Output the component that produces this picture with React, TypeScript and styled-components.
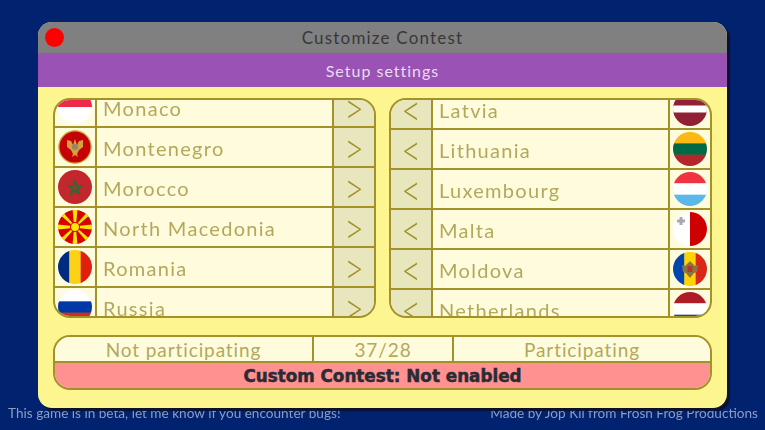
import styled, { createGlobalStyle } from "styled-components";

const GlobalStyle = createGlobalStyle`
  html, body {
    margin: 0;
    width: 765px;
    height: 430px;
    overflow: hidden;
    background: #00226f;
  }
`;

const Page = styled.div`
  width: 765px;
  height: 430px;
  box-sizing: border-box;
  padding-top: 22px;
  display: flex;
  flex-direction: column;
  font-family: Lato, "Open Sans", sans-serif;
  filter: blur(0.55px);
`;

const Window = styled.main`
  position: relative;
  z-index: 1;
  width: 689px;
  height: 386px;
  margin-left: 38px;
  display: flex;
  flex-direction: column;
  background: #fdf58f;
  border-radius: 14px;
  box-shadow: 3px 3px 1px #0a1230;
`;

const TitleBar = styled.header`
  position: relative;
  height: 31px;
  flex: none;
  display: flex;
  align-items: center;
  justify-content: center;
  background: #808080;
  border-radius: 14px 14px 0 0;
  color: #38383c;
  font-size: 17px;
  letter-spacing: 1.2px;
`;

const CloseDot = styled.span`
  position: absolute;
  left: 7px;
  top: 5.5px;
  width: 19px;
  height: 19px;
  border-radius: 50%;
  background: #ff0000;
`;

const SubBar = styled.div`
  height: 34px;
  flex: none;
  display: flex;
  align-items: center;
  justify-content: center;
  background: #9a52b5;
  color: #eadcf0;
  font-size: 16px;
  letter-spacing: 1px;
`;

const Content = styled.div`
  flex: 1;
  display: flex;
  flex-direction: column;
  gap: 17px;
  padding: 11px 15px 0;
`;

const Panels = styled.div`
  display: grid;
  grid-template-columns: 323px 323px;
  column-gap: 13px;
`;

const Panel = styled.section`
  box-sizing: border-box;
  height: 220px;
  border: 2px solid #a3912a;
  border-radius: 17px;
  overflow: hidden;
  background: #fefcdc;
`;

const RowList = styled.div<{ $offset: number }>`
  margin-top: ${(p) => -p.$offset}px;
`;

const Row = styled.div`
  box-sizing: border-box;
  height: 40px;
  display: grid;
  grid-template-columns: 40px 1fr 40px;
  border-bottom: 2px solid #a3912a;
`;

const FlagCell = styled.div`
  display: flex;
  align-items: center;
  justify-content: center;
`;

const NameCell = styled.div`
  display: flex;
  align-items: center;
  padding: 2px 0 0 6px;
  border-left: 2px solid #a3912a;
  border-right: 2px solid #a3912a;
  color: #b3a85c;
  font-size: 20px;
  letter-spacing: 1.3px;
`;

const MoveButton = styled.button`
  display: flex;
  align-items: center;
  justify-content: center;
  border: 0;
  padding: 0;
  overflow: hidden;
  background: #e8e6bd;
  color: #a09028;
  font-family: inherit;
`;

const Chevron = styled.span`
  display: inline-block;
  font-size: 34px;
  font-weight: 300;
  line-height: 26px;
  transform: scaleY(1.3);
`;

const Summary = styled.section`
  box-sizing: border-box;
  height: 55px;
  border: 2px solid #a3912a;
  border-radius: 17px;
  overflow: hidden;
  display: flex;
  flex-direction: column;
`;

const SummaryHead = styled.div`
  height: 24px;
  flex: none;
  display: grid;
  grid-template-columns: 257px 140px 1fr;
  background: #fefcdc;
  border-bottom: 2px solid #a3912a;
`;

const SummaryCell = styled.div`
  display: flex;
  align-items: center;
  justify-content: center;
  color: #b3a85c;
  font-size: 19px;
  letter-spacing: 0.9px;
  & + & {
    border-left: 2px solid #a3912a;
  }
`;

const StatusBar = styled.div`
  flex: 1;
  display: flex;
  align-items: center;
  justify-content: center;
  background: #ff9191;
  color: #2b2b33;
  font-family: "DejaVu Sans", sans-serif;
  font-size: 16.8px;
  font-weight: 700;
  -webkit-text-stroke: 0.5px #2b2b33;
`;

const Footer = styled.footer`
  display: flex;
  justify-content: space-between;
  margin-top: -3px;
  padding: 0 7px 0 8px;
  color: #8c9cc6;
  font-size: 13.6px;
  line-height: 16px;
`;

function Disc({ children }: { children: React.ReactNode }) {
  return (
    <svg width="34" height="34" viewBox="0 0 34 34">
      <defs>
        <clipPath id="disc">
          <circle cx="17" cy="17" r="17" />
        </clipPath>
      </defs>
      <g clipPath="url(#disc)">{children}</g>
    </svg>
  );
}

function Stripes({ colors }: { colors: string[] }) {
  const h = 34 / colors.length;
  return (
    <>
      {colors.map((c, i) => (
        <rect key={c + i} x="0" y={i * h} width="34" height={h + 0.3} fill={c} />
      ))}
    </>
  );
}

function Bars({ colors }: { colors: string[] }) {
  const w = 34 / colors.length;
  return (
    <>
      {colors.map((c, i) => (
        <rect key={c + i} x={i * w} y="0" width={w + 0.3} height="34" fill={c} />
      ))}
    </>
  );
}

const flags: Record<string, React.ReactNode> = {
  Monaco: <Stripes colors={["#ee2a4b", "#ffffff"]} />,
  Montenegro: (
    <>
      <circle cx="17" cy="17" r="17" fill="#d3ae3b" />
      <circle cx="17" cy="17" r="15.5" fill="#c40308" />
      <path d="M9 10 L13 11 L15 15 L17 9 L19 15 L21 11 L25 10 L25 17 L21 20 L19 24 L20 27 L17 25 L14 27 L15 24 L13 20 L9 17 Z" fill="#d8a03c" />
      <circle cx="17" cy="17" r="3" fill="#8a8a70" />
    </>
  ),
  Morocco: (
    <>
      <rect width="34" height="34" fill="#c1272d" />
      <path d="M17 9 L19.2 15.3 L25.6 15.3 L20.4 19.2 L22.3 25.5 L17 21.7 L11.7 25.5 L13.6 19.2 L8.4 15.3 L14.8 15.3 Z" fill="#2b6a33" />
      <path d="M17 14.5 L18 16.6 L20 16.8 L18.6 18.4 L19 20.4 L17 19.4 L15 20.4 L15.4 18.4 L14 16.8 L16 16.6 Z" fill="#a03a30" />
    </>
  ),
  "North Macedonia": (
    <>
      <rect width="34" height="34" fill="#d80000" />
      {[0, 45, 90, 135, 180, 225, 270, 315].map((a) => (
        <path
          key={a}
          d={a % 90 === 0 ? "M16.2 17 L14.5 -1 L19.5 -1 L17.8 17 Z" : "M16.4 17 L15 -3 L19 -3 L17.6 17 Z"}
          fill="#ffe600"
          transform={`rotate(${a} 17 17)`}
        />
      ))}
      <circle cx="17" cy="17" r="5" fill="#d80000" />
      <circle cx="17" cy="17" r="4" fill="#ffe600" />
    </>
  ),
  Romania: <Bars colors={["#002b7f", "#fcd116", "#e0200f"]} />,
  Russia: <Stripes colors={["#ffffff", "#0039a6", "#d52b1e"]} />,
  Latvia: (
    <>
      <rect width="34" height="34" fill="#8f2035" />
      <rect y="13.5" width="34" height="7" fill="#ffffff" />
    </>
  ),
  Lithuania: <Stripes colors={["#fdb913", "#006a44", "#b3272b"]} />,
  Luxembourg: <Stripes colors={["#ef3340", "#ffffff", "#5bb8e8"]} />,
  Malta: (
    <>
      <Bars colors={["#ffffff", "#cf0000"]} />
      <path d="M4 7.5 H6.5 V5 H9.5 V7.5 H12 V10.5 H9.5 V13 H6.5 V10.5 H4 Z" fill="#a8a8ae" />
    </>
  ),
  Moldova: (
    <>
      <Bars colors={["#0046ae", "#ffd200", "#d9281a"]} />
      <path d="M9 13 L12 14 L17 9 L22 14 L25 13 L24 20 L21 21 L17 26 L13 21 L10 20 Z" fill="#8a7440" />
      <rect x="14.5" y="14" width="5" height="6" fill="#b33a2a" />
    </>
  ),
  Netherlands: <Stripes colors={["#ae1c28", "#ffffff", "#21468b"]} />,
};

type Side = "left" | "right";

function CountryList({ side, names, offset }: { side: Side; names: string[]; offset: number }) {
  return (
    <Panel>
      <RowList $offset={offset}>
        {names.map((name) => {
          const flag = (
            <FlagCell>
              <Disc>{flags[name]}</Disc>
            </FlagCell>
          );
          const move = (
            <MoveButton>
              <Chevron>{side === "left" ? ">" : "<"}</Chevron>
            </MoveButton>
          );
          return (
            <Row key={name}>
              {side === "left" ? flag : move}
              <NameCell>{name}</NameCell>
              {side === "left" ? move : flag}
            </Row>
          );
        })}
      </RowList>
    </Panel>
  );
}

export default function App() {
  return (
    <>
      <GlobalStyle />
      <Page>
        <Window>
          <TitleBar>
            <CloseDot />
            Customize Contest
          </TitleBar>
          <SubBar>Setup settings</SubBar>
          <Content>
            <Panels>
              <CountryList
                side="left"
                offset={12}
                names={["Monaco", "Montenegro", "Morocco", "North Macedonia", "Romania", "Russia"]}
              />
              <CountryList
                side="right"
                offset={10}
                names={["Latvia", "Lithuania", "Luxembourg", "Malta", "Moldova", "Netherlands"]}
              />
            </Panels>
            <Summary>
              <SummaryHead>
                <SummaryCell>Not participating</SummaryCell>
                <SummaryCell>37/28</SummaryCell>
                <SummaryCell>Participating</SummaryCell>
              </SummaryHead>
              <StatusBar>Custom Contest: Not enabled</StatusBar>
            </Summary>
          </Content>
        </Window>
        <Footer>
          <span>This game is in beta, let me know if you encounter bugs!</span>
          <span>Made by Jop Kil from Frosh Frog Productions</span>
        </Footer>
      </Page>
    </>
  );
}
